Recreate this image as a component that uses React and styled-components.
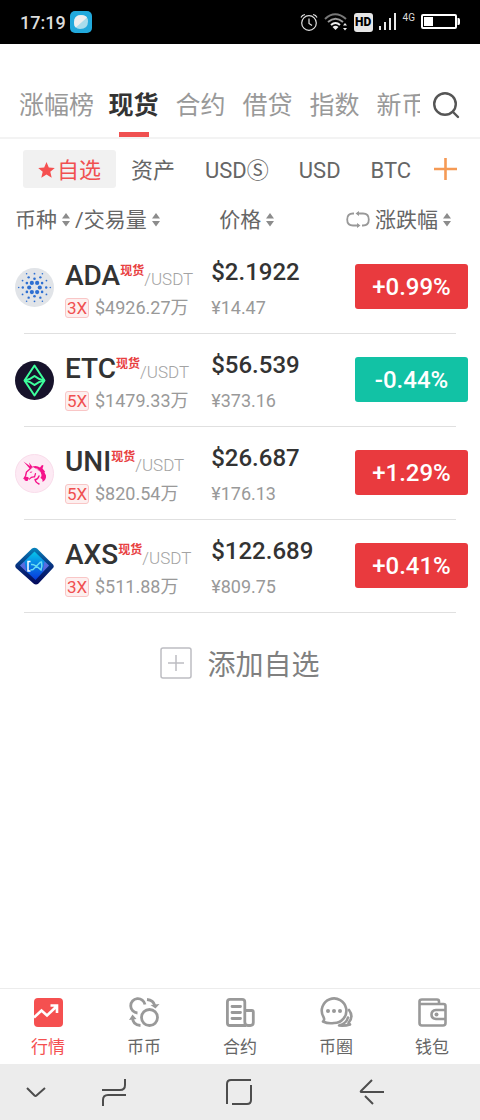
import React from 'react'
import styled, { createGlobalStyle } from 'styled-components'
import { useState } from 'react';

const GlobalStyle = createGlobalStyle`
  * {
    box-sizing: border-box;
  }
  body {
    margin: 0;
    background: #ffffff;
    font-family: Roboto, "Noto Sans CJK SC", sans-serif;
  }
  button {
    border: none;
    padding: 0;
    background: none;
    font: inherit;
    color: inherit;
    cursor: pointer;
  }
  svg {
    display: block;
    flex-shrink: 0;
  }
`;

const Page = styled.div`
  display: flex;
  flex-direction: column;
  min-height: 100vh;
`;

/* status bar */
const StatusBar = styled.div`
  display: flex;
  align-items: center;
  justify-content: space-between;
  height: 44px;
  padding: 0 20px;
  background: #000000;
  color: #dcdcdc;
`;
const StatusGroup = styled.div`
  display: flex;
  align-items: center;
  gap: ${(props) => props.$gap}px;
`;
const Clock = styled.span`
  font-size: 18px;
  font-weight: 500;
`;
const HdBadge = styled.span`
  width: 19px;
  height: 19px;
  border-radius: 3px;
  background: #e6e6e6;
  color: #000000;
  font-size: 12px;
  font-weight: 900;
  line-height: 19px;
  text-align: center;
`;
const Network = styled.span`
  align-self: flex-start;
  font-size: 10px;
  line-height: 10px;
`;

/* top tabs */
const Header = styled.header`
  display: flex;
  align-items: flex-start;
  padding: 42px 20px 0 13px;
  border-bottom: 2px solid #f3f3f3;
`;
const Tabs = styled.nav`
  display: flex;
  flex: 1;
  min-width: 0;
  overflow: hidden;
`;
const Tab = styled.button`
  display: flex;
  flex-direction: column;
  flex-shrink: 0;
  align-items: center;
  gap: 6px;
  min-width: 67px;
  padding: 0 6px;
  font-size: 25px;
  line-height: 40px;
  white-space: nowrap;
  font-weight: ${(props) => (props.$active ? 700 : 400)};
  color: ${(props) => (props.$active ? '#333333' : '#999999')};

  &::after {
    content: '';
    width: 30px;
    height: 5px;
    background: ${(props) => (props.$active ? '#f05050' : 'transparent')};
  }
`;
const SearchButton = styled.button`
  display: flex;
  align-items: center;
  justify-content: flex-end;
  width: 40px;
  height: 38px;
`;

/* quote filters */
const Filters = styled.div`
  display: flex;
  align-items: center;
  padding: 11px 23px 10px;
`;
const Filter = styled.button`
  display: flex;
  align-items: center;
  gap: 2px;
  height: 38px;
  padding: 3px 15px 0;
  border-radius: 3px;
  font-size: 22px;
  line-height: 40px;
  white-space: nowrap;
  color: ${(props) => (props.$active ? '#f05050' : '#666666')};
  background: ${(props) => (props.$active ? '#f1f1f1' : 'none')};
`;
const PlusButton = styled.button`
  margin-left: auto;
`;

/* market table */
const Table = styled.table`
  width: 100%;
  table-layout: fixed;
  border-collapse: collapse;
`;
const HeadCell = styled.th`
  width: ${(props) => props.$width};
  height: 43px;
  padding: ${(props) => props.$pad};
  font-size: 21px;
  font-weight: 400;
  line-height: 30px;
  color: #666666;
`;
const HeadContent = styled.div`
  display: flex;
  align-items: center;
  justify-content: ${(props) => (props.$end ? 'flex-end' : 'flex-start')};
  gap: 5px;
  white-space: nowrap;
`;
const SortButton = styled.button`
  display: flex;
  align-items: center;
  gap: 5px;
`;
const Row = styled.tr`
  height: 93px;
  background: linear-gradient(#e0e0e0, #e0e0e0) center bottom / calc(100% - 48px) 1px no-repeat;
`;
const Cell = styled.td`
  padding: ${(props) => props.$pad};
  vertical-align: ${(props) => props.$align || 'top'};
  text-align: ${(props) => (props.$end ? 'right' : 'left')};
`;
const Coin = styled.div`
  display: flex;
  align-items: center;
  gap: 11px;
`;
const CoinInfo = styled.div`
  display: flex;
  flex-direction: column;
  white-space: nowrap;
`;
const NameLine = styled.div`
  display: flex;
  align-items: baseline;
  height: 42px;
  line-height: 46px;
`;
const Symbol = styled.span`
  font-size: 28px;
  font-weight: 500;
  color: #333333;
`;
const SpotTag = styled.span`
  align-self: flex-start;
  padding-top: 9px;
  font-size: 12px;
  font-weight: 700;
  line-height: 18px;
  color: #e8403f;
`;
const Quote = styled.span`
  font-size: 17px;
  font-weight: 300;
  color: #a3a3a3;
`;
const SubLine = styled.div`
  display: flex;
  align-items: center;
  gap: 6px;
  height: 26px;
  font-size: 18px;
  line-height: 26px;
  color: #999999;
`;
const Leverage = styled.span`
  width: 24px;
  height: 20px;
  border: 1px solid #f9c6c6;
  border-radius: 3px;
  background: #fdefef;
  color: #f05050;
  font-size: 17px;
  line-height: 18px;
  text-align: center;
`;
const Price = styled.div`
  height: 43px;
  font-size: 24px;
  font-weight: 500;
  line-height: 40px;
  color: #333333;
`;
const Change = styled.button`
  width: 113px;
  height: 45px;
  border-radius: 3px;
  background: ${(props) => (props.$up ? '#e93a3e' : '#12c2a5')};
  color: #ffffff;
  font-size: 24px;
  font-weight: 500;
`;

const AddArea = styled.div`
  flex: 1;
  padding-top: 30px;
`;
const AddButton = styled.button`
  display: flex;
  align-items: center;
  gap: 15px;
  margin: 0 auto;
  font-size: 28px;
  color: #808080;
`;

/* bottom navigation */
const BottomNav = styled.nav`
  display: flex;
  height: 76px;
  border-top: 1px solid #ececec;
`;
const NavItem = styled.button`
  display: flex;
  flex: 1;
  flex-direction: column;
  align-items: center;
  gap: 6px;
  padding-top: 7px;
  font-size: 17px;
  line-height: 26px;
  color: ${(props) => (props.$active ? '#f55050' : '#666666')};
`;
const SystemBar = styled.div`
  display: grid;
  grid-template-columns: 17% 20% 1fr 24%;
  align-items: center;
  justify-items: center;
  height: 56px;
  padding-right: 12%;
  background: #ececec;
`;

const AppIcon = () => (
  <svg width="22" height="22" viewBox="0 0 22 22">
    <rect width="22" height="22" rx="5" fill="#22a9dc" />
    <path d="M11 4q7 0 7 6.500 0 7.500-8 7.500-6 0-6-6.500Q4 4 11 4z" fill="#a9dcec" />
    <path d="M11 4q4.500 0 6 2.500L5.800 16.500Q4 15 4 11.500 4 4 11 4z" fill="#eeeeee" />
  </svg>
);
const AlarmIcon = () => (
  <svg width="18" height="18" viewBox="0 0 18 18" fill="none" stroke="#e0e0e0" strokeWidth="1.2">
    <circle cx="9" cy="10" r="7.300" />
    <path d="M9 5.500v5l3 2M1 4.500q1-2.500 4-3M17 4.500q-1-2.500-4-3" />
  </svg>
);
const WifiIcon = () => (
  <svg width="24" height="18" viewBox="0 0 24 18" fill="none" strokeWidth="2">
    <path d="M1 6Q11-3.500 22 6" stroke="#777777" />
    <path d="M4 9q7.500-6.500 15 0" stroke="#999999" />
    <path d="M7 12q4.500-4 9 0" stroke="#eeeeee" />
    <path d="M8.500 14q3-2.500 6 0l-3 3z" fill="#eeeeee" />
    <path d="M21 10l2 2.500h-4zM21 17.500l2-2.500h-4z" fill="#eeeeee" />
  </svg>
);
const SignalIcon = () => (
  <svg width="18" height="18" viewBox="0 0 18 18" fill="#e8e8e8">
    <path d="M0 13h2v4H0zM5 9h2v8H5zM10 5h2v12h-2zM15 0h2v17h-2z" />
  </svg>
);
const BatteryIcon = () => (
  <svg width="39" height="16" viewBox="0 0 39 16">
    <rect x="1" y="1" width="34" height="13" rx="1" fill="none" stroke="#ffffff" strokeWidth="2" />
    <path d="M3 3h9v9H3zM36.500 4h1q1.500 0 1.500 2v3q0 2-1.500 2h-1z" fill="#ffffff" />
  </svg>
);
const SearchIcon = () => (
  <svg width="28" height="28" viewBox="0 0 28 28" fill="none" stroke="#555555" strokeWidth="2.400" strokeLinecap="round">
    <circle cx="13" cy="13" r="10.800" />
    <path d="M21 21l5 5" />
  </svg>
);
const StarIcon = () => (
  <svg width="17" height="18" viewBox="0 0 17 18">
    <path d="M8.500 0l2.300 5.400 6 .5-4.500 3.900 1.400 5.900-5.200-3.100-5.200 3.100 1.400-5.900L.2 5.900l6-.5z" fill="#f55050" />
  </svg>
);
const PlusIcon = () => (
  <svg width="23" height="22" viewBox="0 0 23 22" stroke="#f59a55" strokeWidth="2.600">
    <path d="M11.500 0v22M0 11h23" />
  </svg>
);
const SortIcon = () => (
  <svg width="8" height="14" viewBox="0 0 8 14" fill="#8c8c8c">
    <path d="M4 0l4 5.500H0zM0 8h8l-4 5.500z" />
  </svg>
);
const SwapIcon = () => (
  <svg width="24" height="18" viewBox="0 0 24 18">
    <g fill="none" stroke="#999999" strokeWidth="1.800">
      <path d="M8 2.500H7Q1.200 2.500 1.200 8.500T7 14.500h6" />
      <path d="M11 2.500h6q5.800 0 5.800 6T17 14.500h-1" />
    </g>
    <path d="M9.500 2.500L13 0v5zM14.500 14.500L11 12v5z" fill="#999999" />
  </svg>
);

// rings of dots: [radius, dot size, count, rotation]
const adaRings = [
  [5.300, 2.100, 6, 0],
  [8.800, 1.300, 6, 30],
  [11.700, 1.200, 6, 0],
  [13.800, 0.9, 6, 30],
  [15.800, 0.8, 6, 0],
];

const AdaLogo = () => (
  <svg width="39" height="39" viewBox="0 0 39 39">
    <circle cx="19.500" cy="19.500" r="19.500" fill="#e1e4e8" />
    {adaRings.map(([r, size, count, turn]) =>
      Array.from({ length: count }, (_, i) => {
        const a = ((turn + (i * 360) / count) * Math.PI) / 180;
        return (
          <circle key={r + '-' + i} cx={19.5 + r * Math.cos(a)} cy={19.5 + r * Math.sin(a)} r={size} fill="#2d6fd2" />
        );
      })
    )}
  </svg>
);
const EtcLogo = () => (
  <svg width="39" height="39" viewBox="0 0 39 39">
    <circle cx="19.500" cy="19.500" r="19.500" fill="#17132b" />
    <g fill="none" stroke="#3dff9c" strokeWidth="2" strokeLinejoin="round">
      <path d="M19.500 4.500L29.500 19.500 19.500 34.500 9.500 19.500z" />
      <path d="M9.500 19.500q6-1 10-4.500 4 3.500 10 4.500" />
      <path d="M9.500 19.500q6 1 10 4.500 4-3.500 10-4.500" />
    </g>
  </svg>
);
const UniLogo = () => (
  <svg width="39" height="39" viewBox="0 0 39 39">
    <circle cx="19.500" cy="19.500" r="19" fill="#fdeaf4" stroke="#f9dcea" />
    <path d="M8.500 7.500l8.500 6-2 1.500zM14 8.500l4 5-2.500.5z" fill="#f5138a" />
    <path d="M17 12.500q5-1.500 8 1l2-2.500 1.500.5-1 3 2.500 3-.5 1 1.500 3q.5 4-3.500 6.500.5-3-2-4 2-4-1-6.500-3-3-7.500-5z" fill="#f5138a" />
    <g fill="none" stroke="#f5138a" strokeLinecap="round" strokeLinejoin="round">
      <path d="M16 14l-4.500 4-1 4-1.500 2.500" strokeWidth="1.400" />
      <path d="M14.500 25q2-2.500 5-2l1-3.500" strokeWidth="1.200" />
      <path d="M24 22q-1.500 4-4 3.500.5 3 4 4.500" strokeWidth="1.400" />
    </g>
    <path d="M9 23.500q3-1.500 5 .5l-1.500 3q-3.500.5-3.500-3.500zM14.500 18l3-.5-1.500 1.500z" fill="#f5138a" />
    <path d="M21.500 14.500q4.500 2.500 4.500 8" fill="none" stroke="#fdeaf4" strokeWidth="0.8" />
  </svg>
);
const AxsLogo = () => (
  <svg width="39" height="39" viewBox="0 0 39 39">
    <defs>
      <linearGradient id="axsEdge" x1="0" y1="0" x2="0" y2="1">
        <stop offset="0" stopColor="#0784bd" />
        <stop offset="0.5" stopColor="#07307e" />
        <stop offset="1" stopColor="#04095c" />
      </linearGradient>
      <linearGradient id="axsFill" x1="0" y1="0" x2="0" y2="1">
        <stop offset="0" stopColor="#06c8ea" />
        <stop offset="0.5" stopColor="#087be4" />
        <stop offset="1" stopColor="#0739dc" />
      </linearGradient>
    </defs>
    <path d="M17 1.500q2.500-1.500 5 0L38 17.500q1.500 2 0 3.500L23.500 36.500q-2.500 2-5 0L1 21q-1.500-2 0-4z" fill="url(#axsEdge)" />
    <path d="M19.500 4.500L34 18.500 20.500 33 5 18.500z" fill="url(#axsFill)" />
    <path d="M5 18.500l4.500-4 2 10.500zM34 18.500l-4.500-4-2 10.500z" fill="#7d64dc" opacity="0.7" />
    <g fill="none" strokeWidth="1.500">
      <path d="M15.500 14.500H13v9.500h2.500" stroke="#ffffff" />
      <path d="M16 17.500q4-.5 10 5.500 1.500-4 .5-8-1-.5-3 2l-5.500 5.500-2.500.5" stroke="#66dcf2" />
    </g>
  </svg>
);
const AddIcon = () => (
  <svg width="32" height="32" viewBox="0 0 32 32" fill="none" stroke="#bdbdc2" strokeWidth="1.500">
    <rect x="1" y="1" width="30" height="30" rx="2" />
    <path d="M16 8v16M8 16h16" />
  </svg>
);

const MarketIcon = () => (
  <svg width="32" height="32" viewBox="0 0 32 32">
    <rect x="2" y="2" width="29" height="29" rx="4" fill="#f55050" />
    <path d="M2 21.500l7.500-7 5.500 5L25 10M18.500 9.500h6.500V17" fill="none" stroke="#ffffff" strokeWidth="2.600" />
  </svg>
);
const CoinsIcon = () => (
  <svg width="32" height="32" viewBox="0 0 32 32">
    <g fill="none" stroke="#999999" strokeWidth="2.800">
      <circle cx="21.500" cy="21.500" r="8" />
      <path d="M9.500 17A7.200 7.200 0 1 1 17 8.500" />
      <path d="M19 3.500q6.500.5 8 6.500" />
      <path d="M4.500 21q0 8 8 8.500" />
    </g>
    <path d="M22.500 9l9-1-4 4.500zM1 24l7.500-1-4-4.500z" fill="#999999" />
  </svg>
);
const ContractIcon = () => (
  <svg width="32" height="32" viewBox="0 0 32 32" fill="none" stroke="#999999" strokeWidth="2.800">
    <path d="M22 29.500H6q-2.600 0-2.600-2.600V6Q3.400 3.400 6 3.400h12q2.800 0 2.800 2.600v20q0 3.500 3 3.500h2.500q3 0 3-3V16q0-1.500-1.500-1.500h-7" />
    <path d="M8 10.500h8.500M8 16.500h8.500M8 22.500h8.500" strokeLinecap="round" />
  </svg>
);
const ChatIcon = () => (
  <svg width="36" height="32" viewBox="0 0 36 32">
    <g fill="none" stroke="#999999" strokeWidth="2.600" strokeLinecap="round" strokeLinejoin="round">
      <path d="M5.500 21A12.300 12.300 0 1 1 16 27q-6 1-11-1.500 2-1.500.5-4.500z" />
      <path d="M31 14q5 6.500-.5 13l1.500 1.500q-4.500 1.500-11 1 7.500-2 9-8" />
    </g>
    <g fill="#999999">
      <circle cx="10" cy="15" r="2" />
      <circle cx="16" cy="15" r="2" />
      <circle cx="22" cy="15" r="2" />
    </g>
  </svg>
);
const WalletIcon = () => (
  <svg width="32" height="32" viewBox="0 0 32 32">
    <g fill="none" stroke="#999999" strokeWidth="2.600">
      <path d="M3.500 8v19q0 2.500 2.500 2.500h21q2.500 0 2.500-2.500V10q0-2-2-2H3.500V5.500Q3.500 3.500 6 3.500h15q2 0 2 2V8" />
      <path d="M29.500 14H20q-4.500.5-4.500 4.500T20 23h9.500" />
    </g>
    <circle cx="20.500" cy="18.500" r="2" fill="#999999" />
  </svg>
);

const tabs = ['涨幅榜', '现货', '合约', '借贷', '指数', '新币'];
const filters = ['自选', '资产', 'USDⓈ', 'USD', 'BTC'];

const coins = [
  { symbol: 'ADA', Logo: AdaLogo, leverage: '3X', volume: '$4926.27万', price: '$2.1922', cny: '¥14.47', change: '+0.99%' },
  { symbol: 'ETC', Logo: EtcLogo, leverage: '5X', volume: '$1479.33万', price: '$56.539', cny: '¥373.16', change: '-0.44%' },
  { symbol: 'UNI', Logo: UniLogo, leverage: '5X', volume: '$820.54万', price: '$26.687', cny: '¥176.13', change: '+1.29%' },
  { symbol: 'AXS', Logo: AxsLogo, leverage: '3X', volume: '$511.88万', price: '$122.689', cny: '¥809.75', change: '+0.41%' },
];

const navItems = [
  { label: '行情', Icon: MarketIcon },
  { label: '币币', Icon: CoinsIcon },
  { label: '合约', Icon: ContractIcon },
  { label: '币圈', Icon: ChatIcon },
  { label: '钱包', Icon: WalletIcon },
];

const CoinRow = ({ coin }) => (
  <Row>
    <Cell $pad="12px 0 0 15px">
      <Coin>
        <coin.Logo />
        <CoinInfo>
          <NameLine>
            <Symbol>{coin.symbol}</Symbol>
            <SpotTag>现货</SpotTag>
            <Quote>/USDT</Quote>
          </NameLine>
          <SubLine>
            <Leverage>{coin.leverage}</Leverage>
            <span>{coin.volume}</span>
          </SubLine>
        </CoinInfo>
      </Coin>
    </Cell>
    <Cell $pad="11px 0 0">
      <Price>{coin.price}</Price>
      <SubLine>{coin.cny}</SubLine>
    </Cell>
    <Cell $pad="0 12px 2px 0" $align="middle" $end>
      <Change $up={coin.change[0] === '+'}>{coin.change}</Change>
    </Cell>
  </Row>
);

const App = () => {
  const [tab, setTab] = useState('现货');
  const [filter, setFilter] = useState('自选');
  const [page, setPage] = useState('行情');

  return (
    <Page>
      <GlobalStyle />
      <StatusBar>
        <StatusGroup $gap={4}>
          <Clock>17:19</Clock>
          <AppIcon />
        </StatusGroup>
        <StatusGroup $gap={6}>
          <AlarmIcon />
          <WifiIcon />
          <HdBadge>HD</HdBadge>
          <SignalIcon />
          <Network>4G</Network>
          <BatteryIcon />
        </StatusGroup>
      </StatusBar>

      <Header>
        <Tabs>
          {tabs.map((name) => (
            <Tab key={name} $active={name === tab} onClick={() => setTab(name)}>{name}</Tab>
          ))}
        </Tabs>
        <SearchButton aria-label="搜索"><SearchIcon /></SearchButton>
      </Header>

      <Filters>
        {filters.map((name) => (
          <Filter key={name} $active={name === filter} onClick={() => setFilter(name)}>
            {name === '自选' && <StarIcon />}
            {name}
          </Filter>
        ))}
        <PlusButton aria-label="添加"><PlusIcon /></PlusButton>
      </Filters>

      <Table>
        <thead>
          <tr>
            <HeadCell $width="44%" $pad="0 0 0 15px">
              <HeadContent>
                <SortButton>币种<SortIcon /></SortButton>
                <SortButton>/交易量<SortIcon /></SortButton>
              </HeadContent>
            </HeadCell>
            <HeadCell $width="27%" $pad="0 0 0 8px">
              <HeadContent>
                <SortButton>价格<SortIcon /></SortButton>
              </HeadContent>
            </HeadCell>
            <HeadCell $width="29%" $pad="0 29px 0 0">
              <HeadContent $end>
                <SwapIcon />
                <SortButton>涨跌幅<SortIcon /></SortButton>
              </HeadContent>
            </HeadCell>
          </tr>
        </thead>
        <tbody>
          {coins.map((coin) => (
            <CoinRow key={coin.symbol} coin={coin} />
          ))}
        </tbody>
      </Table>

      <AddArea>
        <AddButton>
          <AddIcon />
          添加自选
        </AddButton>
      </AddArea>

      <BottomNav>
        {navItems.map(({ label, Icon }) => (
          <NavItem key={label} $active={label === page} onClick={() => setPage(label)}>
            <Icon />
            {label}
          </NavItem>
        ))}
      </BottomNav>

      <SystemBar>
        <button aria-label="收起">
          <svg width="24" height="28" viewBox="0 0 24 28" fill="none" stroke="#4d4d4d" strokeWidth="2">
            <path d="M3 10l7.500 7.500q1 1 2 0L21 10" />
          </svg>
        </button>
        <button aria-label="最近任务">
          <svg width="26" height="28" viewBox="0 0 26 28" fill="none" stroke="#4d4d4d" strokeWidth="2">
            <path d="M1 12h18q5 0 5-5V1M25 17H7q-5 0-5 5v6" />
          </svg>
        </button>
        <button aria-label="主页">
          <svg width="26" height="26" viewBox="0 0 26 26" fill="none" stroke="#4d4d4d" strokeWidth="2">
            <path d="M1 25V5q0-4 4-4h20M25 6v15q0 4-4 4H6" />
          </svg>
        </button>
        <button aria-label="返回">
          <svg width="26" height="26" viewBox="0 0 26 26" fill="none" stroke="#4d4d4d" strokeWidth="2">
            <path d="M25 13H3M13 1L2 12q-1 1 1 1M6 17l8 8" />
          </svg>
        </button>
      </SystemBar>
    </Page>
  )
}

export default App;
